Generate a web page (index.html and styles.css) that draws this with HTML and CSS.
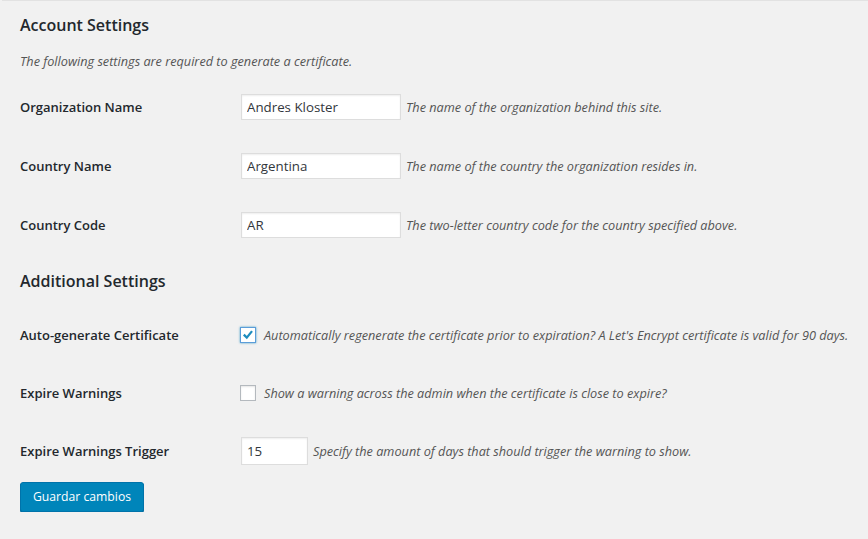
FILE: index.html
```html
<!DOCTYPE html>
<html lang="en">
<head>
    <meta charset="UTF-8">
    <title>Certificate Settings</title>
    <link rel="stylesheet" href="styles.css">
</head>
<body>
    <div class="top-line"></div>

    <form class="wrap" onsubmit="return false">
        <h2>Account Settings</h2>
        <p class="description">The following settings are required to generate a certificate.</p>

        <div class="form-row">
            <label class="row-label" for="org">Organization Name</label>
            <div class="row-field">
                <input type="text" id="org" class="text-input" value="Andres Kloster">
                <span class="description">The name of the organization behind this site.</span>
            </div>
        </div>

        <div class="form-row">
            <label class="row-label" for="country">Country Name</label>
            <div class="row-field">
                <input type="text" id="country" class="text-input" value="Argentina">
                <span class="description">The name of the country the organization resides in.</span>
            </div>
        </div>

        <div class="form-row">
            <label class="row-label" for="code">Country Code</label>
            <div class="row-field">
                <input type="text" id="code" class="text-input" value="AR">
                <span class="description">The two-letter country code for the country specified above.</span>
            </div>
        </div>

        <h2 class="second">Additional Settings</h2>

        <div class="form-row short">
            <span class="row-label">Auto-generate Certificate</span>
            <label class="row-field check-field">
                <span class="checkbox checked">
                    <svg viewBox="0 0 16 16" width="16" height="16"><path d="M3.2 7.6 L6.6 11 L12.6 3.6" fill="none" stroke="#1e8cbe" stroke-width="2.6"/></svg>
                </span>
                <span class="description">Automatically regenerate the certificate prior to expiration? A Let's Encrypt certificate is valid for 90 days.</span>
            </label>
        </div>

        <div class="form-row short">
            <span class="row-label">Expire Warnings</span>
            <label class="row-field check-field">
                <span class="checkbox"></span>
                <span class="description">Show a warning across the admin when the certificate is close to expire?</span>
            </label>
        </div>

        <div class="form-row short">
            <label class="row-label" for="trigger">Expire Warnings Trigger</label>
            <div class="row-field">
                <input type="number" id="trigger" class="text-input small" value="15">
                <span class="description">Specify the amount of days that should trigger the warning to show.</span>
            </div>
        </div>

        <button type="submit" class="button-primary">Guardar cambios</button>
    </form>
</body>
</html>
```

FILE: styles.css
```css
* {
    box-sizing: border-box;
}

body {
    margin: 0;
    background: #f1f1f1;
    color: #23282d;
    font-family: 'Open Sans', 'Noto Sans', sans-serif;
    font-size: 13px;
}

.top-line {
    margin-left: 2px;
    border-top: 1px solid #e2e2e2;
}

/* Form */
.wrap {
    padding: 0 0 0 20px;
}

h2 {
    margin: 13px 0 0;
    font-size: 16px;
    line-height: 22px;
    font-weight: 600;
}

h2.second {
    margin: 16px 0 14px;
}

.description {
    color: #555;
    font-style: italic;
    font-size: 12.7px;
    line-height: 18px;
    white-space: nowrap;
}

p.description {
    margin: 16px 0 7px;
}

.form-row {
    display: grid;
    grid-template-columns: 220px 1fr;
    align-items: center;
    height: 59px;
}

.form-row.short {
    height: 58px;
}

.row-label {
    font-weight: 600;
    font-size: 13px;
}

.row-field {
    display: flex;
    align-items: center;
    gap: 5px;
}

.check-field {
    gap: 8px;
}

/* Inputs */
.text-input {
    width: 160px;
    height: 26px;
    margin: 0 0 0 1px;
    padding: 0 5px;
    border: 1px solid #ddd;
    background: #fff;
    color: #32373c;
    font-family: inherit;
    font-size: 13.3px;
    box-shadow: inset 0 1px 2px rgba(0, 0, 0, 0.07);
    outline: none;
}

.text-input.small {
    width: 67px;
    height: 28px;
    -moz-appearance: textfield;
}

.text-input.small::-webkit-inner-spin-button {
    -webkit-appearance: none;
}

.checkbox {
    flex: none;
    width: 16px;
    height: 16px;
    border: 1px solid #b4b9be;
    background: #fff;
    box-shadow: inset 0 1px 2px rgba(0, 0, 0, 0.1);
    display: flex;
    align-items: center;
    justify-content: center;
}

.checkbox.checked {
    border-color: #5b9dd9;
    box-shadow: 0 0 2px rgba(30, 140, 190, 0.8);
}

.checkbox svg {
    display: block;
}

/* Button */
.button-primary {
    display: block;
    margin-top: 2px;
    height: 30px;
    padding: 0 12px 2px;
    background: #0085ba;
    border: 1px solid #0073aa;
    border-radius: 3px;
    box-shadow: 0 1px 0 #006799;
    color: #fff;
    font-family: inherit;
    font-size: 12.2px;
    cursor: pointer;
}
```
